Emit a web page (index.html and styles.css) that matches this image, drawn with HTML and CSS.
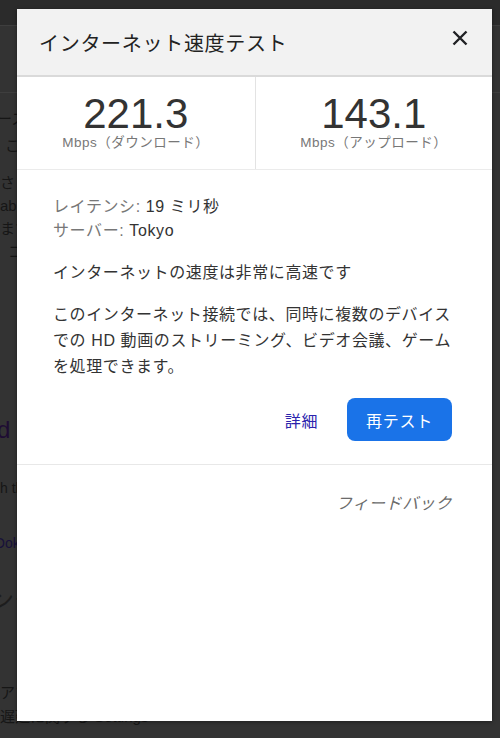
FILE: index.html
```html
<!DOCTYPE html>
<html>
<head>
    <title>インターネット速度テスト</title>
    <link rel="stylesheet" href="styles.css">
</head>
<body>
    <div class="page">
        <div class="topbar"></div>
        <div class="tabs"></div>
        <div class="block block-a">
            <div class="line in-n3">ースの結果</div>
            <div class="line in-5">このページ</div>
        </div>
        <div class="block block-b">
            <div class="line">さまざまな</div>
            <div class="line">ab テスト</div>
            <div class="line">ますので</div>
            <div class="line in-8">コンテンツ</div>
        </div>
        <div class="title-link">d Test</div>
        <div class="small">h the test</div>
        <div class="small link">Ookla speedtest</div>
        <div class="heading">ンター</div>
        <div class="block block-c">
            <div class="line">アプリ</div>
            <div class="line">遅延に関する Settings</div>
        </div>
    </div>

    <div class="dialog">
        <div class="dialog-head">
            <h2>インターネット速度テスト</h2>
            <button class="close" aria-label="閉じる">
                <svg width="16" height="16" viewBox="0 0 16 16">
                    <path d="M1.5 1.5 L14.5 14.5 M14.5 1.5 L1.5 14.5" stroke="#202124" stroke-width="2.4" fill="none"/>
                </svg>
            </button>
        </div>
        <div class="stats">
            <div class="stat">
                <div class="value">221.3</div>
                <div class="unit">Mbps（ダウンロード）</div>
            </div>
            <div class="stat">
                <div class="value">143.1</div>
                <div class="unit">Mbps（アップロード）</div>
            </div>
        </div>
        <div class="details">
            <div class="meta">
                <div><span class="label">レイテンシ:</span> 19 ミリ秒</div>
                <div><span class="label">サーバー:</span> Tokyo</div>
            </div>
            <p class="verdict">インターネットの速度は非常に高速です</p>
            <p class="desc">このインターネット接続では、同時に複数のデバイスでの HD 動画のストリーミング、ビデオ会議、ゲームを処理できます。</p>
            <div class="actions">
                <a class="more" href="#">詳細</a>
                <button class="retest">再テスト</button>
            </div>
        </div>
        <div class="feedback">フィードバック</div>
    </div>
</body>
</html>
```

FILE: styles.css
```css
body {
    margin: 0;
    height: 738px;
    overflow: hidden;
    background-color: #333333;
    font-family: "Liberation Sans", "Noto Sans CJK JP", sans-serif;
    position: relative;
}

/* page behind the overlay */
.page {
    color: #161616;
    font-size: 15px;
    white-space: nowrap;
}
.topbar {
    height: 25px;
    background-color: #2b2b2b;
    border-bottom: 1px solid #3e3e3e;
}
.tabs {
    height: 66px;
    border-bottom: 1px solid #3e3e3e;
}
.block-a {
    margin-top: 12px;
}
.block-a .line {
    line-height: 27px;
}
.block-b {
    margin-top: 12px;
}
.block-b .line {
    line-height: 23px;
}
.in-n3 {
    margin-left: -3px;
}
.in-5 {
    margin-left: 5px;
}
.in-8 {
    margin-left: 8px;
}
.title-link {
    margin-top: 152px;
    margin-left: -3px;
    font-size: 24px;
    line-height: 30px;
    color: #1e0c33;
}
.small {
    margin-top: 33px;
    font-size: 14px;
    line-height: 20px;
}
.small.link {
    margin-top: 35px;
    margin-left: -6px;
    color: #17103a;
}
.heading {
    margin-top: 32px;
    margin-left: -10px;
    font-size: 24px;
    line-height: 30px;
    color: #1d1d1d;
}
.block-c {
    margin-top: 66px;
}
.block-c .line {
    line-height: 24px;
}

/* dialog */
.dialog {
    position: absolute;
    top: 9px;
    left: 17px;
    width: 475px;
    height: 712px;
    background-color: #fff;
    display: flex;
    flex-direction: column;
    box-shadow: 0 1px 4px rgba(0, 0, 0, 0.4);
}
.dialog-head {
    height: 66px;
    background-color: #f2f2f2;
    border-bottom: 2px solid #dadada;
    display: flex;
    align-items: center;
    justify-content: space-between;
    padding: 0 24px 0 22px;
}
.dialog-head h2 {
    margin: 0;
    font-size: 20px;
    font-weight: normal;
    letter-spacing: 0.7px;
    color: #222;
}
.close {
    border: none;
    background: none;
    padding: 0;
    width: 16px;
    height: 16px;
    margin-top: -8px;
    cursor: pointer;
}
.stats {
    display: grid;
    grid-template-columns: 1fr 1fr;
    border-bottom: 1px solid #ebebeb;
}
.stat {
    height: 92px;
    display: flex;
    flex-direction: column;
    align-items: center;
    padding-top: 16px;
    box-sizing: border-box;
}
.stat + .stat {
    border-left: 1px solid #e3e3e3;
}
.value {
    font-size: 42px;
    line-height: 42px;
    color: #333;
}
.unit {
    margin-top: 0;
    font-size: 13.5px;
    line-height: 16px;
    color: #777;
    letter-spacing: 0.5px;
}
.details {
    padding: 25px 40px 0 36px;
    font-size: 16px;
    letter-spacing: 0.6px;
    color: #333;
    border-bottom: 1px solid #e8e8e8;
    height: 295px;
    box-sizing: border-box;
}
.meta {
    line-height: 24px;
}
.label {
    color: #777;
}
.verdict {
    margin: 17px 0 0;
    line-height: 26px;
}
.desc {
    margin: 16px 0 0;
    line-height: 26px;
}
.actions {
    display: flex;
    justify-content: flex-end;
    align-items: center;
    gap: 29px;
    margin-top: 18px;
}
.more {
    color: #2b23ad;
    text-decoration: none;
    font-size: 16px;
}
.retest {
    width: 105px;
    height: 43px;
    border: none;
    border-radius: 8px;
    background-color: #1a73e8;
    color: #fff;
    font-family: inherit;
    font-size: 16px;
    letter-spacing: 0.8px;
    cursor: pointer;
}
.feedback {
    padding: 25px 40px 0 0;
    text-align: right;
    font-style: italic;
    font-size: 16px;
    letter-spacing: 0.6px;
    color: #6b6b6b;
}
```
